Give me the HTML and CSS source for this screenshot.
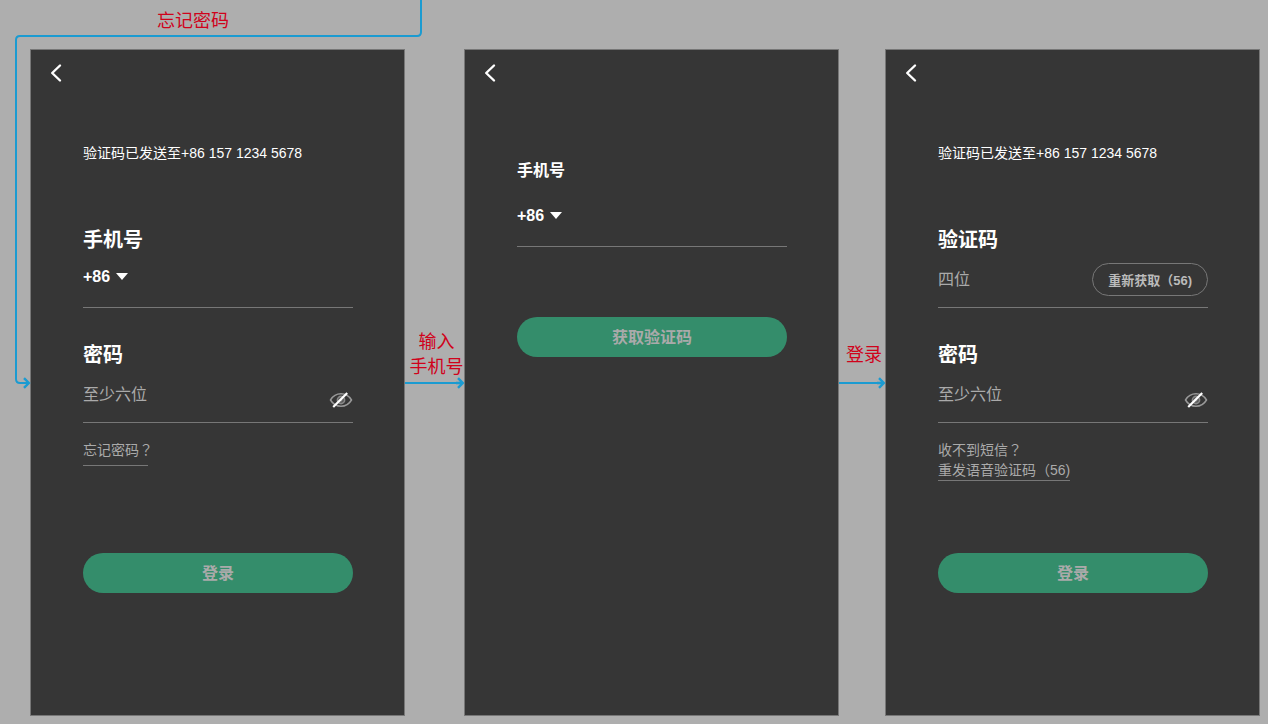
FILE: index.html
```html
<!DOCTYPE html>
<html lang="zh-CN">
<head>
  <meta charset="UTF-8">
  <meta name="viewport" content="width=device-width, initial-scale=1.0">
  <title>忘记密码流程</title>
  <link rel="stylesheet" href="styles.css">
</head>
<body>
  <!-- 图标 -->
  <svg class="sprite" aria-hidden="true">
    <symbol id="icon-back" viewBox="0 0 12 20">
      <path d="M10 2.500L2.200 10l7.800 7.500" fill="none" stroke="#fff" stroke-width="2.400" stroke-linecap="round" stroke-linejoin="round"/>
    </symbol>
    <symbol id="icon-eye" viewBox="0 0 24 18">
      <path d="M1.500 9C4 4.800 7.600 2.800 12 2.800S20 4.800 22.500 9C20 13.200 16.400 15.200 12 15.200S4 13.200 1.500 9z" fill="none" stroke="#999" stroke-width="1.500"/>
      <circle cx="12" cy="9" r="3.600" fill="#555" stroke="#888" stroke-width="1.600"/>
      <circle cx="12" cy="9" r="1.500" fill="#888"/>
      <path d="M4.200 16L18.200 2" stroke="#fff" stroke-width="2.200"/>
    </symbol>
    <symbol id="icon-arrow" viewBox="0 0 8 12">
      <path d="M0 6h6M2 1.200L6.800 6 2 10.800" fill="none" stroke="#1b9bd1" stroke-width="2.400"/>
    </symbol>
  </svg>

  <main class="board">
    <p class="entry-label">忘记密码</p>
    <svg class="entry-line" width="410" height="390" viewBox="0 0 410 390" aria-hidden="true">
      <path d="M406 0v32q0 4-4 4H5q-4 0-4 4v339q0 4 4 4h9" fill="none" stroke="#1b9bd1" stroke-width="2"/>
      <path d="M9 378.200l4.800 4.800-4.800 4.800" fill="none" stroke="#1b9bd1" stroke-width="2.400"/>
    </svg>

    <!-- 登录 -->
    <section class="phone">
      <header class="nav">
        <button class="back" type="button" aria-label="返回"><svg width="12" height="20"><use href="#icon-back"/></svg></button>
      </header>
      <form class="form">
        <p class="sent">验证码已发送至+86 157 1234 5678</p>
        <div class="field">
          <label for="tel1">手机号</label>
          <div class="row">
            <div class="area"><select aria-label="区号"><option>+86</option></select></div>
            <input class="input" id="tel1" type="tel">
          </div>
        </div>
        <div class="field">
          <label for="pwd1">密码</label>
          <div class="row">
            <input class="input" id="pwd1" type="password" placeholder="至少六位">
            <button class="eye" type="button" aria-label="显示密码"><svg width="24" height="18"><use href="#icon-eye"/></svg></button>
          </div>
        </div>
        <div class="help">
          <a class="forgot" href="#">忘记密码<span class="mark" lang="zh-TW">？</span></a>
        </div>
        <button class="submit" type="button">登录</button>
      </form>
    </section>

    <div class="link">
      <p class="link-label"><span>输入<br>手机号</span></p>
      <div class="arrow"><span class="line"></span><svg width="8" height="12"><use href="#icon-arrow"/></svg></div>
    </div>

    <!-- 获取验证码 -->
    <section class="phone">
      <header class="nav">
        <button class="back" type="button" aria-label="返回"><svg width="12" height="20"><use href="#icon-back"/></svg></button>
      </header>
      <form class="form form-tel">
        <div class="field">
          <label for="tel2">手机号</label>
          <div class="row">
            <div class="area"><select aria-label="区号"><option>+86</option></select></div>
            <input class="input" id="tel2" type="tel">
          </div>
        </div>
        <button class="submit" type="button">获取验证码</button>
      </form>
    </section>

    <div class="link">
      <p class="link-label"><span>登录</span></p>
      <div class="arrow"><span class="line"></span><svg width="8" height="12"><use href="#icon-arrow"/></svg></div>
    </div>

    <!-- 重置密码 -->
    <section class="phone">
      <header class="nav">
        <button class="back" type="button" aria-label="返回"><svg width="12" height="20"><use href="#icon-back"/></svg></button>
      </header>
      <form class="form">
        <p class="sent">验证码已发送至+86 157 1234 5678</p>
        <div class="field">
          <label for="code">验证码</label>
          <div class="row">
            <input class="input" id="code" type="text" placeholder="四位">
            <button class="resend" type="button">重新获取（56)</button>
          </div>
        </div>
        <div class="field">
          <label for="pwd3">密码</label>
          <div class="row">
            <input class="input" id="pwd3" type="password" placeholder="至少六位">
            <button class="eye" type="button" aria-label="显示密码"><svg width="24" height="18"><use href="#icon-eye"/></svg></button>
          </div>
        </div>
        <div class="help">
          <p>收不到短信<span class="mark" lang="zh-TW">？</span></p>
          <a class="voice" href="#">重发语音验证码（56)</a>
        </div>
        <button class="submit" type="button">登录</button>
      </form>
    </section>
  </main>
</body>
</html>
```
FILE: styles.css
```css
* {
  box-sizing: border-box;
}
body {
  margin: 0;
  background-color: #aeaeae;
  color: #fff;
  font-family: "Liberation Sans", "Noto Sans CJK SC", sans-serif;
  font-size: 14px;
  line-height: 20px;
}
p {
  margin: 0;
}
svg {
  display: block;
}
button,
input,
select {
  margin: 0;
  padding: 0;
  border: none;
  border-radius: 0;
  background: none;
  color: inherit;
  font-family: inherit;
}
button {
  cursor: pointer;
}
.sprite {
  position: absolute;
  width: 0;
  height: 0;
}
.board {
  position: relative;
  display: grid;
  grid-template-columns: minmax(0, 1fr) 59px minmax(0, 1fr) 46px minmax(0, 1fr);
  grid-template-rows: 49px 1fr;
  min-height: 100vh;
  padding: 0 8px 8px 30px;
}

/* 流程连线 */
.entry-label {
  grid-column: 1 / -1;
  padding: 9px 0 0 127px;
  color: #d0021b;
  font-size: 18px;
  line-height: 25px;
}
.entry-line {
  position: absolute;
  top: 0;
  left: 15px;
}
.link {
  display: flex;
  flex-direction: column;
}
.link-label {
  display: flex;
  align-items: center;
  justify-content: center;
  height: 50px;
  margin-top: 281px;
  padding-left: 4px;
  color: #d0021b;
  font-size: 18px;
  line-height: 25px;
  text-align: center;
  white-space: nowrap;
}
.arrow {
  display: flex;
  align-items: center;
  margin-top: -3px;
}
.line {
  flex: 1;
  height: 2px;
  background-color: #1b9bd1;
}

/* 手机页面 */
.phone {
  border: 1px solid #777;
  background-color: #363636;
}
.nav {
  display: flex;
  align-items: center;
  height: 46px;
  padding-left: 19px;
}
.form {
  display: flex;
  flex-direction: column;
  padding: 0 51px 0 52px;
}
.sent {
  margin: 47px 0 30px;
}
.field {
  margin-top: 33px;
}
.field label {
  display: block;
  font-size: 20px;
  font-weight: bold;
  line-height: 28px;
}
.row {
  display: flex;
  align-items: flex-start;
  height: 54px;
  border-bottom: 1px solid #777;
}
.area {
  display: flex;
  align-items: center;
}
.area select {
  width: 33px;
  height: 44px;
  appearance: none;
  font-size: 16px;
  font-weight: bold;
}
.area::after {
  content: "";
  border: 6px solid transparent;
  border-top: 7px solid #fff;
  border-bottom: none;
}
.input {
  flex: 1;
  min-width: 0;
  height: 52px;
  outline: none;
  font-size: 16px;
}
.input::placeholder {
  color: #aaa;
}
.eye {
  margin-top: 22px;
}
.resend {
  height: 33px;
  margin-top: 9px;
  padding: 0 15px;
  border: 1px solid #777;
  border-radius: 17px;
  color: #bbb;
  font-size: 13px;
  font-weight: bold;
}
.help {
  height: 40px;
  margin: 17px 0 73px;
  color: #aaa;
}
.help a {
  display: inline-block;
  border-bottom: 1px solid #777;
  color: inherit;
  text-decoration: none;
}
.mark {
  font-family: "Noto Sans CJK TC", sans-serif;
  line-height: 1;
}
.forgot {
  width: 65px;
  padding-bottom: 5px;
  white-space: nowrap;
}
.help .voice {
  line-height: 19px;
}
.submit {
  height: 40px;
  padding-bottom: 2px;
  border-radius: 20px;
  background-color: #348d6b;
  color: #aaa;
  font-size: 16px;
  font-weight: bold;
}
.form-tel .field {
  margin: 61px 0 70px;
}
.form-tel label {
  margin-bottom: 8px;
  font-size: 16px;
}
```
